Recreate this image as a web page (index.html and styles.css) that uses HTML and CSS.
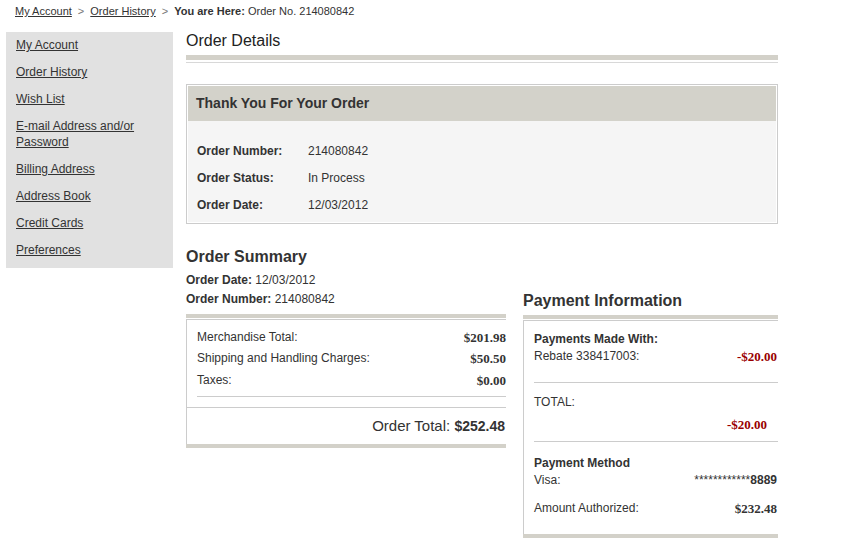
FILE: index.html
```html
<!DOCTYPE html>
<html lang="en">
<head>
<meta charset="utf-8">
<title>Order Details</title>
<link rel="stylesheet" href="styles.css">
</head>
<body>
<div class="crumbs">
  <a href="#">My Account</a><span class="sep">&gt;</span><a href="#">Order History</a><span class="sep">&gt;</span><b>You are Here:</b> Order No. 214080842
</div>
<div class="page">
  <nav class="side">
    <a href="#" class="side-link">My Account</a>
    <a href="#" class="side-link">Order History</a>
    <a href="#" class="side-link">Wish List</a>
    <a href="#" class="side-link">E-mail Address and/or Password</a>
    <a href="#" class="side-link">Billing Address</a>
    <a href="#" class="side-link">Address Book</a>
    <a href="#" class="side-link">Credit Cards</a>
    <a href="#" class="side-link">Preferences</a>
  </nav>
  <main class="main">
    <h1 class="title">Order Details</h1>
    <div class="rule"></div>
    <section class="thanks">
      <div class="thanks-head">Thank You For Your Order</div>
      <div class="thanks-body">
        <div class="drow"><span class="dlabel">Order Number:</span><span>214080842</span></div>
        <div class="drow"><span class="dlabel">Order Status:</span><span>In Process</span></div>
        <div class="drow"><span class="dlabel">Order Date:</span><span>12/03/2012</span></div>
      </div>
    </section>
    <div class="cols">
      <div class="col-left">
        <h2 class="sub">Order Summary</h2>
        <div class="meta">
          <div><b>Order Date:</b> 12/03/2012</div>
          <div><b>Order Number:</b> 214080842</div>
        </div>
        <div class="bar"></div>
        <div class="sumbox">
          <div class="sumlist">
            <div class="srow"><span>Merchandise Total:</span><span class="amt">$201.98</span></div>
            <div class="srow"><span>Shipping and Handling Charges:</span><span class="amt">$50.50</span></div>
            <div class="srow"><span>Taxes:</span><span class="amt">$0.00</span></div>
          </div>
          <div class="total">Order Total: <b>$252.48</b></div>
        </div>
        <div class="bar"></div>
      </div>
      <div class="col-right">
        <h2 class="sub">Payment Information</h2>
        <div class="bar"></div>
        <div class="paybox">
          <div class="psec psec-1">
            <div class="pline"><b>Payments Made With:</b></div>
            <div class="pline prow"><span>Rebate 338417003:</span><span class="amt neg">-$20.00</span></div>
          </div>
          <div class="psec psec-2">
            <div class="pline">TOTAL:</div>
            <div class="pline ptotal"><span class="amt neg">-$20.00</span></div>
          </div>
          <div class="psec psec-3">
            <div class="pline"><b>Payment Method</b></div>
            <div class="pline prow"><span>Visa:</span><span class="card">************<b>8889</b></span></div>
            <div class="pline prow auth"><span>Amount Authorized:</span><span class="amt">$232.48</span></div>
          </div>
        </div>
        <div class="bar"></div>
      </div>
    </div>
  </main>
</div>
</body>
</html>
```
FILE: styles.css
```css
* { box-sizing: content-box; }
body {
  margin: 0;
  font-family: "Liberation Sans", Arial, sans-serif;
  font-size: 12px;
  color: #333;
  background: #fff;
}
a { color: #333; }

.crumbs {
  padding-left: 15px;
  height: 22px;
  line-height: 22px;
  font-size: 11px;
  margin-bottom: 10px;
}
.crumbs .sep {
  display: inline-block;
  margin: 0 6px;
  color: #777;
}

.page {
  display: flex;
  align-items: flex-start;
}

.side {
  margin-left: 6px;
  width: 157px;
  padding: 0 0 4px 10px;
  background: #e1e1e1;
  display: flex;
  flex-direction: column;
}
.side-link {
  display: block;
  padding: 5px 0 6px;
  line-height: 16px;
  font-size: 12px;
  color: #333;
  text-decoration: underline;
  width: 140px;
}

.main {
  margin-left: 13px;
  width: 592px;
}
.title {
  margin: 0 0 6px;
  padding-top: 1px;
  font-size: 16px;
  line-height: 16px;
  font-weight: normal;
  color: #222;
}
.rule {
  height: 2px;
  border-top: 5px solid #d3d1c9;
  border-bottom: 1px solid #d8d8d8;
}

.thanks {
  margin-top: 21px;
  border: 1px solid #cccccc;
  padding: 1px;
  background: #fff;
}
.thanks-head {
  height: 35px;
  line-height: 35px;
  padding-left: 8px;
  background: #d3d2ca;
  font-size: 14px;
  font-weight: bold;
  color: #333;
}
.thanks-body {
  background: #f5f5f5;
  padding: 17px 9px 3px;
}
.drow {
  display: flex;
  line-height: 27px;
  height: 27px;
}
.dlabel {
  width: 111px;
  font-weight: bold;
}

.cols {
  display: flex;
  align-items: flex-start;
  gap: 17px;
}
.col-left { width: 320px; }
.col-right { width: 255px; padding-top: 67px; }

.sub {
  margin: 0;
  font-size: 16px;
  line-height: 20px;
  font-weight: bold;
  color: #333;
}
.col-left .sub { margin-top: 23px; }
.col-right .sub { margin-bottom: 4px; }

.meta {
  margin-top: 4px;
  line-height: 19px;
  margin-bottom: 5px;
}

.bar {
  height: 4px;
  background: #d3d1c9;
}

.sumbox {
  margin-top: 1px;
  border-top: 1px solid #cccccc;
  border-left: 1px solid #cccccc;
}
.sumlist {
  margin-left: 10px;
  padding: 7px 0 6px;
  border-bottom: 1px solid #cccccc;
  margin-bottom: 10px;
}
.srow {
  display: flex;
  justify-content: space-between;
  line-height: 21px;
  height: 21px;
}
.srow:last-child { line-height: 23px; }
.amt {
  font-family: "Liberation Serif", "Times New Roman", serif;
  font-weight: bold;
  font-size: 13px;
  color: #333;
}
.neg { color: #990000; }

.total {
  border-top: 1px solid #cccccc;
  height: 36px;
  line-height: 36px;
  text-align: right;
  padding-right: 1px;
  font-size: 15px;
  color: #333;
}
.total b { font-size: 14px; }

.paybox {
  margin-top: 1px;
  border-top: 1px solid #cccccc;
  border-left: 1px solid #cccccc;
  padding-left: 10px;
}
.pline {
  line-height: 17px;
  height: 17px;
}
.prow {
  display: flex;
  justify-content: space-between;
  padding-right: 1px;
}
.psec-1 { padding: 10px 0 17px; }
.psec-2 {
  border-top: 1px solid #cccccc;
  padding: 11px 0 8px;
}
.ptotal {
  margin-top: 5px;
  text-align: right;
  padding-right: 11px;
}
.psec-3 {
  border-top: 1px solid #cccccc;
  padding: 13px 0 17px;
}
.auth { margin-top: 11px; }
.card b { font-weight: bold; }
```
